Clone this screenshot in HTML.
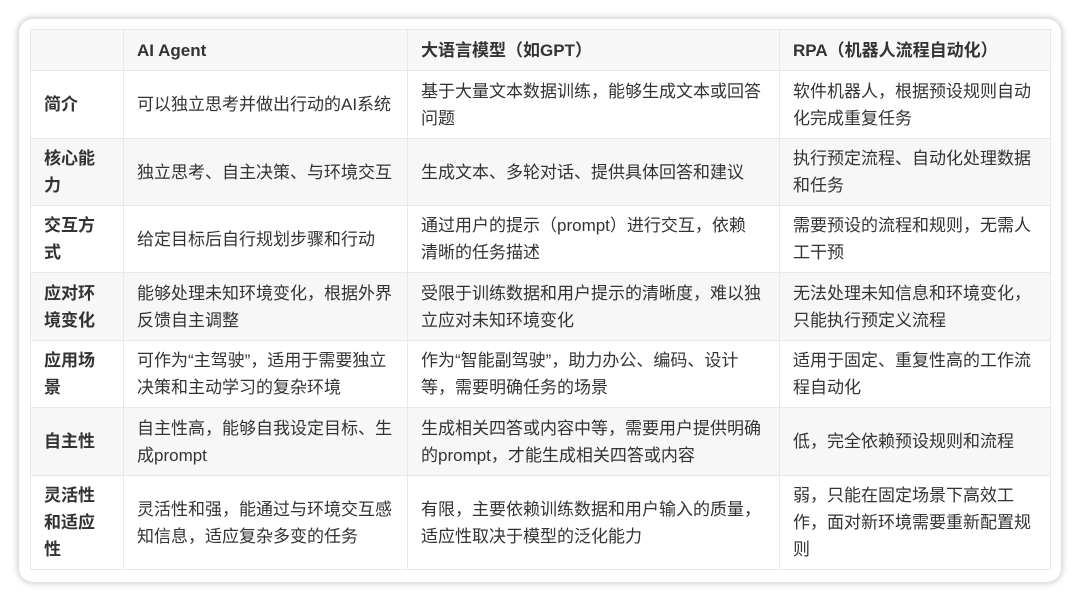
<!DOCTYPE html>
<html><head><meta charset="utf-8"><style>
html,body{margin:0;padding:0;background:#fff;width:1080px;height:601px;overflow:hidden}
.card{position:absolute;left:19px;top:19px;width:1042px;height:563px;background:#fff;border-radius:14px;box-shadow:0 0 6px 2px rgba(0,0,0,0.18)}
table{position:absolute;left:30px;top:29px;border-collapse:collapse;table-layout:fixed;font-family:"Liberation Sans","Noto Sans CJK SC",sans-serif;font-size:17px;line-height:27px;color:#333}
td,th{border:1px solid #e8e8e8;padding:0 13px;vertical-align:middle;text-align:left;overflow:hidden}
th{font-weight:bold;background:#f7f7f7}
td:first-child{font-weight:bold}
tr.g td{background:#f7f7f7}
</style></head><body>
<div class="card"></div>
<table>
<colgroup><col style="width:93px"><col style="width:284px"><col style="width:372px"><col style="width:271px"></colgroup>
<tr style="height:41px"><th></th><th>AI Agent</th><th>大语言模型（如GPT）</th><th>RPA（机器人流程自动化）</th></tr>
<tr style="height:68px"><td>简介</td><td>可以独立思考并做出行动的AI系统</td><td>基于大量文本数据训练，能够生成文本或回答问题</td><td>软件机器人，根据预设规则自动化完成重复任务</td></tr>
<tr class="g" style="height:67px"><td>核心能力</td><td>独立思考、自主决策、与环境交互</td><td>生成文本、多轮对话、提供具体回答和建议</td><td>执行预定流程、自动化处理数据和任务</td></tr>
<tr style="height:67px"><td>交互方式</td><td>给定目标后自行规划步骤和行动</td><td>通过用户的提示（prompt）进行交互，依赖<br>清晰的任务描述</td><td>需要预设的流程和规则，无需人工干预</td></tr>
<tr class="g" style="height:68px"><td>应对环境变化</td><td>能够处理未知环境变化，根据外界反馈自主调整</td><td>受限于训练数据和用户提示的清晰度，难以独立应对未知环境变化</td><td>无法处理未知信息和环境变化，只能执行预定义流程</td></tr>
<tr style="height:67px"><td>应用场景</td><td>可作为“主驾驶”，适用于需要独立决策和主动学习的复杂环境</td><td>作为“智能副驾驶”，助力办公、编码、设计等，需要明确任务的场景</td><td>适用于固定、重复性高的工作流程自动化</td></tr>
<tr class="g" style="height:68px"><td>自主性</td><td>自主性高，能够自我设定目标、生成prompt</td><td>生成相关四答或内容中等，需要用户提供明确的prompt，才能生成相关四答或内容</td><td>低，完全依赖预设规则和流程</td></tr>
<tr style="height:94px"><td>灵活性和适应性</td><td>灵活性和强，能通过与环境交互感知信息，适应复杂多变的任务</td><td>有限，主要依赖训练数据和用户输入的质量，适应性取决于模型的泛化能力</td><td>弱，只能在固定场景下高效工作，面对新环境需要重新配置规则</td></tr>
</table>
</body></html>
